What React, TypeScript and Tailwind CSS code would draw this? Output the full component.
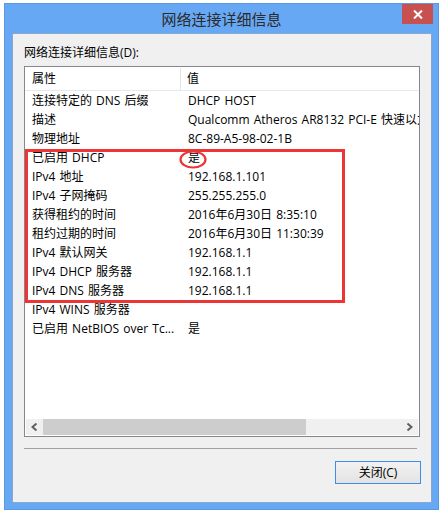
import React from 'react';

const rows: [string, string][] = [
  ['连接特定的 DNS 后缀', 'DHCP HOST'],
  ['描述', 'Qualcomm Atheros AR8132 PCI-E 快速以太网控制器 (NDIS 6.30)'],
  ['物理地址', '8C-89-A5-98-02-1B'],
  ['已启用 DHCP', '是'],
  ['IPv4 地址', '192.168.1.101'],
  ['IPv4 子网掩码', '255.255.255.0'],
  ['获得租约的时间', '2016年6月30日 8:35:10'],
  ['租约过期的时间', '2016年6月30日 11:30:39'],
  ['IPv4 默认网关', '192.168.1.1'],
  ['IPv4 DHCP 服务器', '192.168.1.1'],
  ['IPv4 DNS 服务器', '192.168.1.1'],
  ['IPv4 WINS 服务器', ''],
  ['已启用 NetBIOS over Tc...', '是'],
];

const font = { fontFamily: '"Open Sans", "Noto Sans CJK SC", sans-serif' };

const App = () => {
  return (
    <div className="w-[443px] h-[514px] bg-white overflow-hidden pt-[3px] pl-[4px]" style={font}>
      <div className="w-[435px] h-[507px] bg-[#67a8f4] border border-[#5c98e0] flex flex-col">
        {/* title bar */}
        <div className="h-[29px] grid grid-cols-[1fr_auto_1fr] items-start">
          <div />
          <div className="text-[15px] leading-[20px] text-[#2b2b2b] pt-[5px]">网络连接详细信息</div>
          <div className="flex justify-end pr-[5px]">
            <button className="w-[31px] h-[20px] bg-[#c75050] flex items-center justify-center">
              <svg width="10" height="9" viewBox="0 0 10 9">
                <path d="M1 0.5 L9 8.5 M9 0.5 L1 8.5" stroke="#fff" strokeWidth="2" />
              </svg>
            </button>
          </div>
        </div>

        {/* client area */}
        <div className="ml-[7px] w-[420px] h-[470px] bg-[#f0f0f0] border border-[#8aa6cc] flex flex-col">
          <div className="ml-[11px] mt-[11px] text-[12px] leading-[16px] text-black">网络连接详细信息(D):</div>

          <div className="ml-[11px] mt-[5px] w-[396px] h-[371px] border border-[#828790] bg-white flex flex-col">
            <div className="relative flex-1 overflow-hidden [word-spacing:1px]">
              {/* header */}
              <div className="h-[24px] pt-[1px] flex border-b border-[#e3e9f1] text-[12px] text-black">
                <div className="w-[156px] pl-[7px] flex items-center border-r border-[#e5e5e5]">属性</div>
                <div className="pl-[6px] flex items-center">值</div>
              </div>
              {rows.map(([k, v]) => (
                <div key={k} className="h-[19px] pt-[1px] flex text-[12px] leading-[18px] text-black whitespace-nowrap">
                  <div className="w-[156px] shrink-0 pl-[7px] overflow-hidden">{k}</div>
                  <div className="pl-[7px] overflow-hidden">{v}</div>
                </div>
              ))}
              {/* annotations */}
              <div className="absolute left-0 top-[82px] w-[320px] h-[154px] border-[3px] border-[#ee3434]" />
              <svg className="absolute left-[154px] top-[83px]" width="28" height="19" viewBox="0 0 28 19">
                <ellipse cx="14" cy="9.5" rx="12.5" ry="8" fill="none" stroke="#ee3434" strokeWidth="2.2" />
              </svg>
            </div>

            {/* horizontal scrollbar */}
            <div className="mx-[1px] mb-[1px] h-[16px] bg-[#f0f0f0] flex items-stretch">
              <div className="w-[17px] flex items-center justify-center">
                <svg width="7" height="8" viewBox="0 0 7 8">
                  <path d="M5.5 0.5 L1.5 4 L5.5 7.5" stroke="#606060" strokeWidth="2" fill="none" />
                </svg>
              </div>
              <div className="w-[263px] bg-[#cdcdcd]" />
              <div className="flex-1" />
              <div className="w-[17px] flex items-center justify-center">
                <svg width="7" height="8" viewBox="0 0 7 8">
                  <path d="M1.5 0.5 L5.5 4 L1.5 7.5" stroke="#606060" strokeWidth="2" fill="none" />
                </svg>
              </div>
            </div>
          </div>

          <div className="ml-[11px] mt-[11px] w-[393px] h-[1px] bg-[#a0a0a0]" />

          <div className="flex justify-end mr-[10px] mt-[12px]">
            <button className="w-[86px] h-[23px] border border-[#3c8ee8] bg-gradient-to-b from-[#f2f2f2] to-[#e3e3e3] text-[12px] leading-[21px] text-black">
              关闭(C)
            </button>
          </div>
        </div>
      </div>
    </div>
  );
};

export default App;
